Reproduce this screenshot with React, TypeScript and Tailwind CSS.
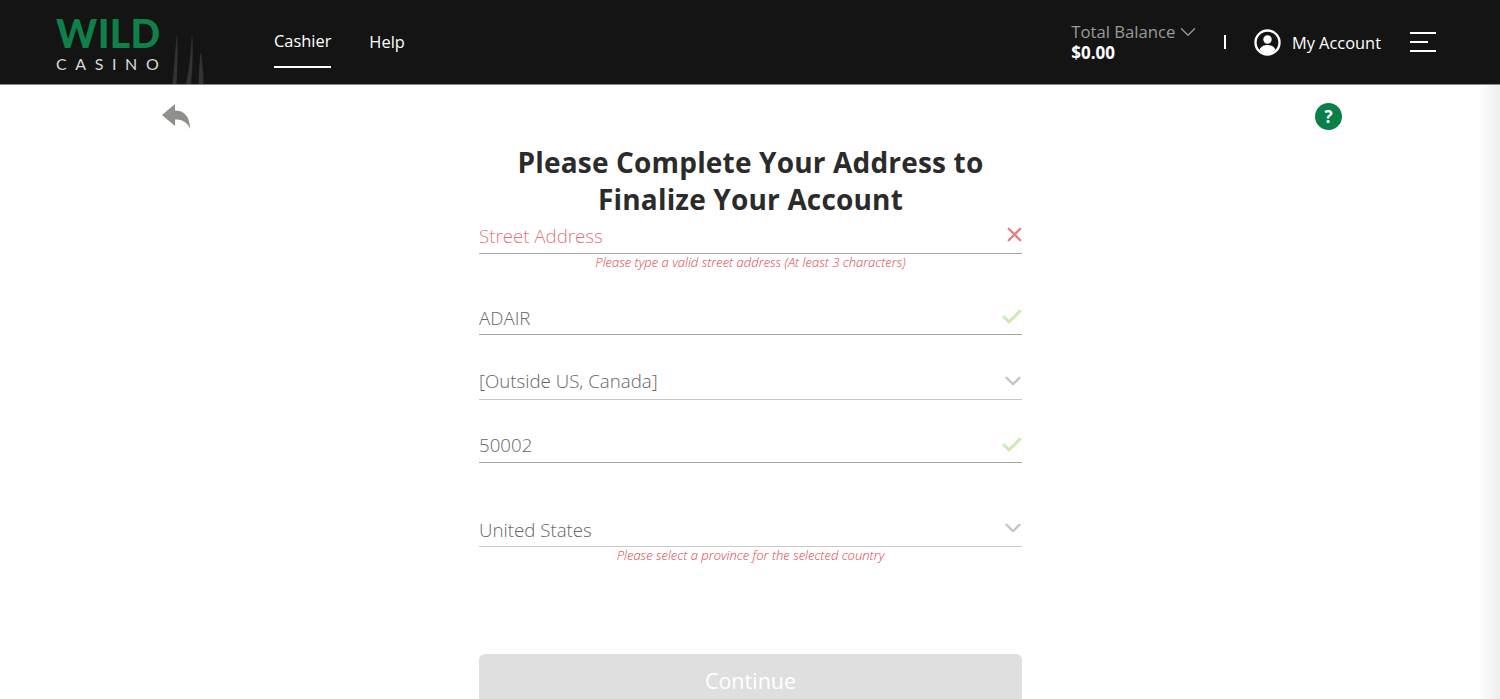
import React from 'react';
import { Check, ChevronDown, X } from 'lucide-react';

const font = { fontFamily: '"Open Sans", sans-serif' };

interface FieldProps {
  value: string;
  error?: string;
  icon: 'x' | 'check' | 'chevron';
  className?: string;
  textClassName?: string;
  lineClassName?: string;
}

const Field: React.FC<FieldProps> = ({ value, error, icon, className = '', textClassName = '', lineClassName = 'border-[#a8a8a8]' }) => {
  return (
    <div className={className}>
      <div className={`flex h-[37px] items-center justify-between border-b pt-[2px] ${lineClassName}`}>
        <span className={`text-[18.7px] font-light leading-[24px] ${textClassName} ${icon === 'x' ? 'text-[#e0757e]' : 'text-[#666666]'}`}>{value}</span>
        {icon === 'x' ? <X size={23} strokeWidth={2.4} className="-mt-[3px] mr-[-4px] text-[#e27f87]" /> : null}
        {icon === 'check' ? <Check size={24} strokeWidth={3} className="-mt-[1px] mr-[-2px] text-[#cbeab0]" /> : null}
        {icon === 'chevron' ? <ChevronDown size={26} strokeWidth={2.2} className="-mt-[3px] mr-[-4px] text-[#c4c4c4]" /> : null}
      </div>
      {error ? (
        <p className="text-center text-[13px] font-light italic leading-[16px] text-[#dc3c4a]">{error}</p>
      ) : null}
    </div>
  );
};

const Logo = () => (
  <div className="relative ml-[56px] mt-[6px] flex w-[105px] flex-col items-start" style={{ fontFamily: 'Lato, sans-serif' }}>
    <span className="text-[39px] font-black leading-[30px] tracking-[0.4px] text-[#0f8048]">WILD</span>
    <span className="mt-[8px] whitespace-nowrap text-[16px] leading-[16px] tracking-[8.6px] text-[#d8d8d8]">CASINO</span>
    {/* claw marks, they stop at the edge of the bar */}
    <svg className="absolute left-[114px] top-[15px] h-[51px] w-[36px] blur-[0.7px]" viewBox="0 0 36 51" fill="#333333">
      <path d="M2.5 51 C4 35 5.5 14 7 0 C8 14 7.5 36 6.5 51 Z" />
      <path d="M16 51 C19 38 21 18 22 0 C23.5 16 22.5 36 21 51 Z" />
      <path d="M28.5 51 C29 42 29.5 28 30.5 19 C32.5 28 33.5 42 33.5 51 Z" />
    </svg>
  </div>
);

const Header = () => (
  <header className="flex h-[85px] items-center border-b border-[#8a8a8a] bg-[#141414] text-white">
    <Logo />
    <nav className="ml-[113px] flex h-full gap-[38px] text-[16.4px]">
      <a className="flex h-[68px] items-center border-b-2 border-white pt-[16px]">Cashier</a>
      <a className="flex h-[68px] items-center pt-[16px]">Help</a>
    </nav>
    <div className="ml-auto flex items-center">
      <div className="leading-[21px]">
        <div className="flex items-center text-[16.7px] text-[#9a9a9a]">
          Total Balance
          <ChevronDown size={26} strokeWidth={1.2} className="-my-[4px]" />
        </div>
        <div className="text-[17px] font-bold">$0.00</div>
      </div>
      <span className="ml-[23px] h-[14px] w-[1.5px] bg-white" />
      <svg className="ml-[28px] h-[27px] w-[27px]" viewBox="0 0 27 27" fill="none">
        <circle cx="13.5" cy="13.5" r="12" stroke="white" strokeWidth="2.4" />
        <circle cx="13.5" cy="10.5" r="4.2" fill="white" />
        <path d="M5.5 20.5 C7.5 16.8 10.5 16 13.5 16 C16.5 16 19.5 16.8 21.5 20.5 C19.5 23.5 16.5 25 13.5 25 C10.5 25 7.5 23.5 5.5 20.5 Z" fill="white" />
      </svg>
      <span className="ml-[11px] mt-[2px] text-[16.4px]">My Account</span>
      <div className="ml-[29px] mr-[64px] flex w-[26px] flex-col gap-[7px]">
        <span className="h-[2px] w-full bg-white" />
        <span className="h-[2px] w-[18px] bg-white" />
        <span className="h-[2px] w-full bg-white" />
      </div>
    </div>
  </header>
);

export default function App() {
  return (
    <div className="h-[699px] overflow-hidden bg-white" style={font}>
      <Header />
      <main className="relative h-[614px] pl-[1px]">
        <svg className="absolute left-[162px] top-[18px] h-[26px] w-[28px]" viewBox="0 0 28 26" fill="#8f8f8b">
          <path d="M0 12 L13 1 L13 7.5 C22 7.5 28 13 28 26 C25 19 21 16.5 13 16.5 L13 23 Z" />
        </svg>
        <div className="absolute left-[1315px] top-[18px] flex h-[27px] w-[27px] items-center justify-center rounded-full bg-[#0a8048] text-[17px] font-bold text-white">
          ?
        </div>
        <div className="absolute bottom-0 right-0 top-0 w-[22px] bg-gradient-to-r from-white to-[#eeeeee]" />
        <div className="mx-auto flex w-[543px] flex-col pt-[59px]">
          <h1 className="-mb-[1px] text-center text-[28px] font-bold leading-[37px] tracking-[0.17px] text-[#2b2b2b]">
            Please Complete Your Address to
            <br />
            Finalize Your Account
          </h1>
          <Field value="Street Address" icon="x" error="Please type a valid street address (At least 3 characters)" />
          <Field value="ADAIR" icon="check" className="mt-[28px]" textClassName="mt-[2px]" />
          <Field value="[Outside US, Canada]" icon="chevron" className="mt-[28px]" textClassName="-mt-[2px]" lineClassName="border-[#c8c8c8]" />
          <Field value="50002" icon="check" className="mt-[26px]" />
          <Field value="United States" icon="chevron" className="mt-[47px]" textClassName="mt-[2px]" lineClassName="border-[#c8c8c8]" error="Please select a province for the selected country" />
          <button className="mt-[91px] h-[54px] w-full rounded-[6px] bg-[#dfdfdf] text-[21.5px] text-white">Continue</button>
        </div>
      </main>
    </div>
  );
}
